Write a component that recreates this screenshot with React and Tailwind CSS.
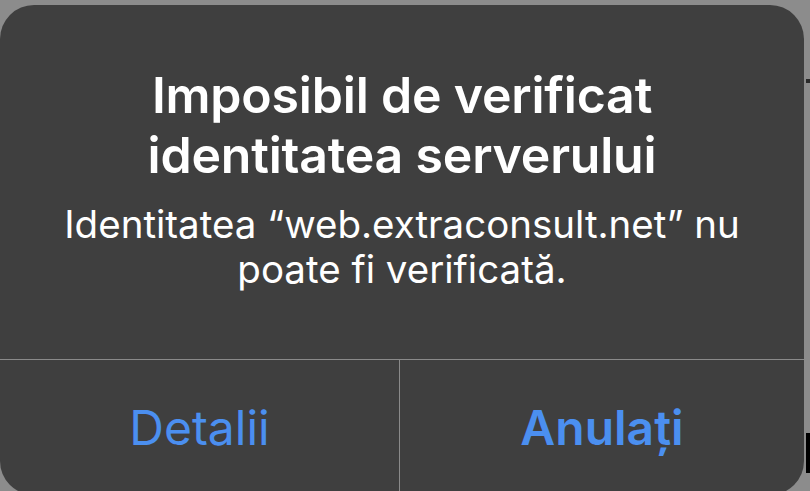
import React from 'react'

const AlertDialog = () => {
    return (
        <div className="w-[810px] h-[491px] bg-[#8c8c8c] overflow-hidden relative" style={{ fontFamily: 'Inter, "Noto Sans", sans-serif' }}>
            {/* background glimpses */}
            <div className="absolute left-[806px] top-[79px] w-[4px] h-[4px] bg-[#2a2a2a]" />
            <div className="absolute left-[806px] top-[433px] w-[4px] h-[40px] bg-black" />

            <div className="mt-[5px] w-[804px] h-[490px] rounded-[34px] bg-[#3f3f3f] flex flex-col text-white">
                <div className="h-[355px] flex flex-col items-center pt-[60px] border-b border-[#8a8a8a] text-center">
                    <h1 className="text-[50px] leading-[60px] font-semibold tracking-[-0.2px]">
                        Imposibil de verificat<br />identitatea serverului
                    </h1>
                    <p className="mt-[17px] text-[38.5px] leading-[45px] font-normal">
                        Identitatea “web.extraconsult.net” nu<br />poate fi verificată.
                    </p>
                </div>
                <div className="flex-1 flex">
                    <button className="w-[400px] h-full border-r border-[#8a8a8a] text-[48px] text-[#4b8ff0] font-normal">
                        Detalii
                    </button>
                    <button className="flex-1 h-full text-[48px] text-[#4b8ff0] font-semibold">
                        Anulați
                    </button>
                </div>
            </div>
        </div>
    )
}

export default AlertDialog
